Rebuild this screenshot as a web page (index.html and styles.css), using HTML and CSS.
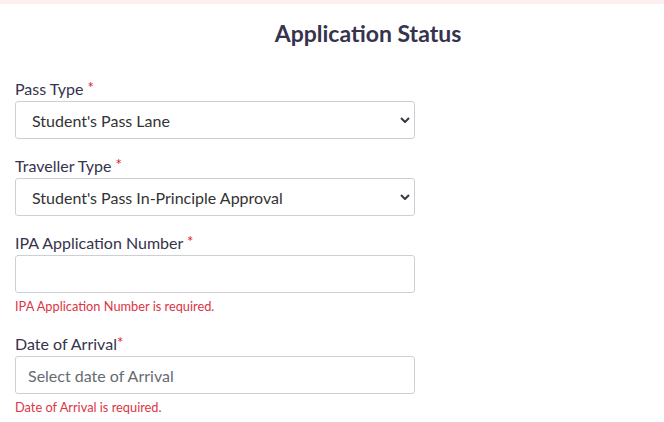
FILE: index.html
```html
<!DOCTYPE html>
<html lang="en">

<head>
    <meta charset="UTF-8">
    <meta name="viewport" content="width=device-width, initial-scale=1.0">
    <title>Application Status</title>

    <link rel="stylesheet" href="styles.css">
</head>

<body>
    <div class="top-strip"></div>

    <div class="page">
        <h1 class="page-title">Application Status</h1>

        <form class="status-form" autocomplete="off">
            <div class="field">
                <label for="pass-type">Pass Type <span class="req">*</span></label>
                <select id="pass-type" class="control">
                    <option>Student's Pass Lane</option>
                </select>
            </div>

            <div class="field">
                <label for="traveller-type">Traveller Type <span class="req">*</span></label>
                <select id="traveller-type" class="control">
                    <option>Student's Pass In-Principle Approval</option>
                </select>
            </div>

            <div class="field">
                <label for="ipa-number">IPA Application Number <span class="req">*</span></label>
                <input type="text" id="ipa-number" class="control">
                <p class="error">IPA Application Number is required.</p>
            </div>

            <div class="field">
                <label for="arrival">Date of Arrival<span class="req">*</span></label>
                <input type="text" id="arrival" class="control" placeholder="Select date of Arrival">
                <p class="error">Date of Arrival is required.</p>
            </div>
        </form>
    </div>
</body>

</html>
```

FILE: styles.css
```css
* {
    margin: 0;
    padding: 0;
    box-sizing: border-box;
}

body {
    font-family: Lato, "Open Sans", sans-serif;
    color: #36334d;
    background: #fff;
}

.top-strip {
    height: 4px;
    background-color: #fdeef0;
}

.page {
    padding: 0 15px;
}

.page-title {
    padding: 17px 0 0 72px;
    text-align: center;
    font-size: 23px;
    font-weight: 700;
    line-height: 24px;
    color: #36334d;
}

.status-form {
    display: flex;
    flex-direction: column;
    gap: 15px;
    margin-top: 32px;
    width: 400px;
}

.field {
    display: flex;
    flex-direction: column;
}

label {
    font-size: 16px;
    line-height: 24px;
    color: #36334d;
}

.req {
    color: #e3161f;
    font-size: 15px;
    vertical-align: 2px;
    line-height: 1;
}

.control {
    height: 38px;
    width: 100%;
    padding: 0 12px;
    border: 1px solid #ccd0d6;
    border-radius: 3px;
    background-color: #fff;
    font-family: inherit;
    font-size: 16px;
    color: #333;
    outline: none;
}

select.control {
    padding: 0 16px;
    appearance: none;
    background-image: url("data:image/svg+xml,%3Csvg xmlns='http://www.w3.org/2000/svg' width='10' height='6' viewBox='0 0 10 6'%3E%3Cpath d='M1 1l4 4 4-4' fill='none' stroke='%23343a40' stroke-width='2'/%3E%3C/svg%3E");
    background-repeat: no-repeat;
    background-position: right 4px center;
}

.control::placeholder {
    color: #666b72;
}

.error {
    margin: 5px 0 3px;
    font-size: 12.8px;
    line-height: 16px;
    color: #dc3545;
}
```
